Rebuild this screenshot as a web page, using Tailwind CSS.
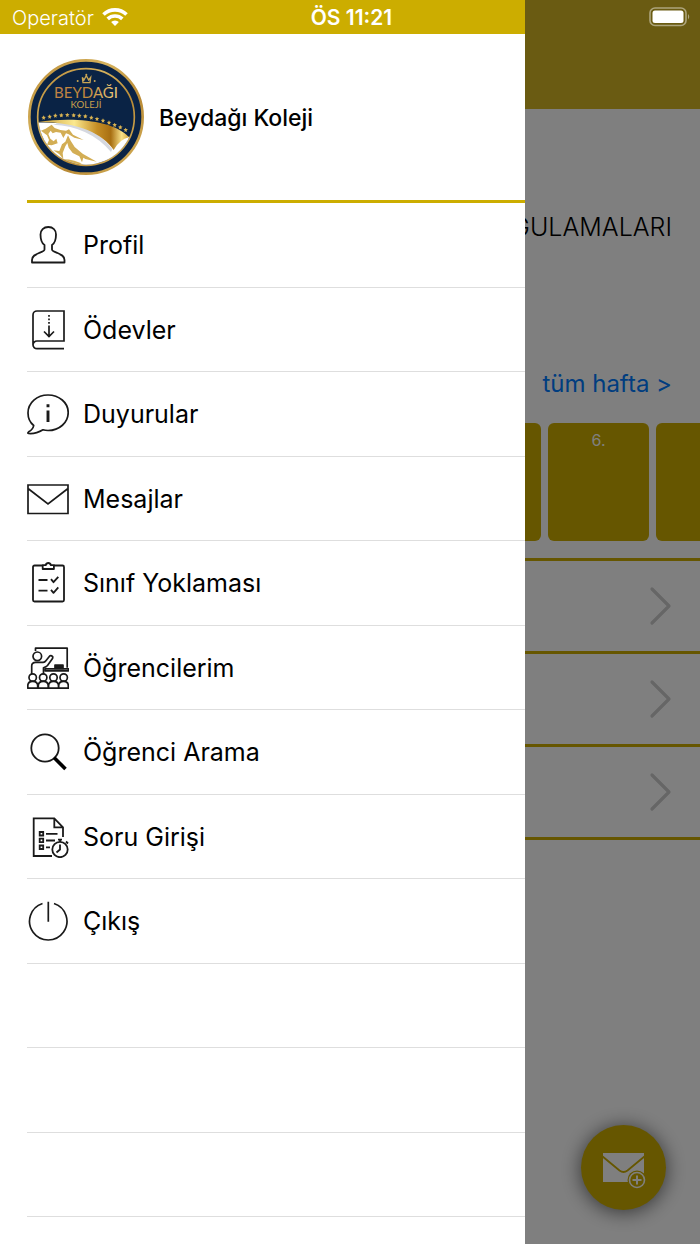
<!DOCTYPE html>
<html lang="tr">
  <head>
    <meta charset="UTF-8">
    <meta name="viewport" content="width=device-width, initial-scale=1">
    <title>Beydağı Koleji</title>
    <script src="https://cdn.jsdelivr.net/npm/@tailwindcss/browser@4"></script>
  </head>
  <body class="bg-white text-black font-['Inter','Liberation_Sans',sans-serif]">
    <div class="relative min-h-screen overflow-hidden">

      <!-- Ana ekran -->
      <main>
        <div class="h-[109px] bg-[#d4b624]"></div>
        <h1 class="mt-[100px] pr-7 text-right text-[25px] leading-9 font-light">UYGULAMALARI</h1>
        <div class="mt-[121px] pr-7 text-right">
          <a href="#hafta" class="text-2xl leading-9 text-[#007aff]">tüm hafta &gt;</a>
        </div>

        <!-- Ders saatleri -->
        <div class="mt-[21px] -mr-[57px] flex justify-end gap-[7px] text-center text-base text-white">
          <div class="h-[118px] w-[101px] shrink-0 rounded-md bg-[#ccad00]"></div>
          <div class="h-[118px] w-[101px] shrink-0 rounded-md bg-[#ccad00] pt-[5px]">6.</div>
          <div class="h-[118px] w-[101px] shrink-0 rounded-md bg-[#ccad00]"></div>
        </div>

        <!-- Liste -->
        <ul class="mt-[17px] border-t-3 border-[#ccad00]">
          <li class="flex h-[93px] items-center justify-end border-b-3 border-[#ccad00] pr-7">
            <svg class="h-10 w-6" viewBox="0 0 24 40" fill="none" stroke="#ccc" stroke-width="3.2" stroke-linecap="round" stroke-linejoin="round"><path d="M4 3l17 17L4 37"/></svg>
          </li>
          <li class="flex h-[93px] items-center justify-end border-b-3 border-[#ccad00] pr-7">
            <svg class="h-10 w-6" viewBox="0 0 24 40" fill="none" stroke="#ccc" stroke-width="3.2" stroke-linecap="round" stroke-linejoin="round"><path d="M4 3l17 17L4 37"/></svg>
          </li>
          <li class="flex h-[93px] items-center justify-end border-b-3 border-[#ccad00] pr-7">
            <svg class="h-10 w-6" viewBox="0 0 24 40" fill="none" stroke="#ccc" stroke-width="3.2" stroke-linecap="round" stroke-linejoin="round"><path d="M4 3l17 17L4 37"/></svg>
          </li>
        </ul>
      </main>

      <!-- Yeni mesaj -->
      <button type="button" aria-label="Yeni mesaj" class="absolute right-[34px] bottom-[34px] flex size-[85px] items-center justify-center rounded-full bg-[#ccad00] shadow-[0_2px_20px_rgba(0,0,0,0.6)]">
        <svg class="size-[44px]" viewBox="0 0 44 44">
          <path d="M1 7h41v29H1z" fill="#fff"/>
          <path d="M0 10l17.500 14.500q4 3 8 0L43 10" fill="none" stroke="#ccad00" stroke-width="1.800"/>
          <circle cx="35" cy="34" r="9.500" fill="#ccad00"/>
          <circle cx="35" cy="34" r="7.500" fill="#ccad00" stroke="#fff" stroke-width="1.600"/>
          <path d="M35 29.500v9M30.500 34h9" stroke="#fff" stroke-width="2"/>
        </svg>
      </button>

      <!-- Karartma -->
      <div class="absolute inset-0 bg-black/50"></div>

      <!-- Yan menü -->
      <aside class="absolute inset-y-0 left-0 w-3/4 overflow-hidden bg-white">
        <div class="h-[34px] bg-[#ccad00]"></div>
        <div class="ml-[27px] flex h-[169px] items-center gap-[14px] border-b-3 border-[#ccad00]">
          <svg class="size-[118px]" viewBox="22 24 354 354" role="img" aria-label="Beydağı Koleji">
            <defs>
              <linearGradient id="gold" x1="0" y1="0" x2="1" y2="1">
                <stop offset="0" stop-color="#b98a35"/>
                <stop offset=".35" stop-color="#d6b25c"/>
                <stop offset=".65" stop-color="#b98a35"/>
                <stop offset="1" stop-color="#d9b65f"/>
              </linearGradient>
              <linearGradient id="letters" x1="0" y1="0" x2="1" y2="0">
                <stop offset="0" stop-color="#c08245"/>
                <stop offset=".5" stop-color="#c0893a"/>
                <stop offset="1" stop-color="#f0d080"/>
              </linearGradient>
              <linearGradient id="ribbon" x1="0" y1="0" x2="1" y2="0">
                <stop offset="0" stop-color="#c99a35"/>
                <stop offset=".4" stop-color="#fbe98f"/>
                <stop offset=".65" stop-color="#c58e25"/>
                <stop offset=".8" stop-color="#a86f12"/>
                <stop offset=".92" stop-color="#f8e087"/>
                <stop offset="1" stop-color="#d6a73c"/>
              </linearGradient>
              <clipPath id="disc"><circle cx="199" cy="201" r="143"/></clipPath>
            </defs>
            <circle cx="199" cy="201" r="170" fill="#0a2345" stroke="url(#gold)" stroke-width="8"/>
            <circle cx="199" cy="201" r="145" fill="none" stroke="url(#gold)" stroke-width="5"/>
            <g clip-path="url(#disc)">
              <path d="M50 218q110-4 170 30 55 26 108 12v90H50z" fill="#fff"/>
              <path d="M100 224q110 5 174 82l4-8q-50-70-150-82z" fill="#d5d8e0"/>
              <path d="M54 216c110-16 230-4 274 46q-28 6-46 38C250 252 180 216 54 216z" fill="url(#ribbon)"/>
              <!-- Dağlar -->
              <path d="M64 242l14-6 18-12 9 10 17 6 17 2 9-4 12 16 32 16-28-7-17-10-8-3-8 14-8-16-14-2-10 4-6-8-7 10 6 14 10 8 8-8 4 14-18 6-14-2 6-14-6-14z" fill="#d3ae55"/>
              <path d="M145 256l8 16 12 19 24 20 42 24-34-8-6-4-4 14-8-18-20-10-12-16-4-14-6 10-8 20 2 18-12-14-18-12 18 2 8-20 10-8z" fill="#d3ae55"/>
              <path d="M62 262l14 32 32 26-14-4-28-26z" fill="#d3ae55"/>
              <path d="M130 328q40 0 66 20l-40-4z" fill="#d3ae55"/>
            </g>
            <path d="M188 82l5 8 7-13 7 13 6-8-2 16h-21z" fill="none" stroke="#c9a555" stroke-width="4"/>
            <circle cx="200" cy="74" r="3" fill="#c9a555"/>
            <circle cx="174" cy="93" r="3" fill="#c9a555"/>
            <circle cx="225" cy="93" r="3" fill="#c9a555"/>
            <text x="199" y="143" text-anchor="middle" font-family="Lato, sans-serif" font-size="45" fill="url(#letters)">BEYDAĞI</text>
            <text x="199" y="175" text-anchor="middle" font-family="Lato, sans-serif" font-size="29" fill="#c9a04c">KOLEJİ</text>
            <g fill="#d9b352">
              <path id="star" d="M0-6l2 4 5 1-4 3 1 5-4-2-4 2 1-5-4-3 5-1z" transform="translate(72 202)"/>
              <use href="#star" x="18" y="-3"/>
              <use href="#star" x="35" y="-6"/>
              <use href="#star" x="53" y="-7"/>
              <use href="#star" x="71" y="-8"/>
              <use href="#star" x="90" y="-7"/>
              <use href="#star" x="107" y="-6"/>
              <use href="#star" x="125" y="-4"/>
              <use href="#star" x="143" y="0"/>
              <use href="#star" x="160" y="4"/>
              <use href="#star" x="178" y="9"/>
              <use href="#star" x="196" y="15"/>
              <use href="#star" x="213" y="22"/>
              <use href="#star" x="230" y="29"/>
              <use href="#star" x="246" y="37"/>
            </g>
          </svg>
          <h2 class="pt-[2px] text-[23px] font-medium">Beydağı Koleji</h2>
        </div>

        <nav class="ml-[27px] text-[25px]">
          <ul>
            <li class="border-b border-[#dedede] odd:h-[85px] even:h-[84px]">
              <a href="#profil" class="flex h-full items-center gap-[14px]">
                <svg class="size-[42px]" viewBox="0 0 42 42" fill="none" stroke="#1a1a1a" stroke-width="1.800" stroke-linejoin="round"><path d="M5 38.500h32.500v-2.500c0-4-3.500-5.500-7-7-3-1.200-5.500-2-5.500-3.500v-4.500c3-2 4-5.500 4-10.500 0-4.500-3-7.500-7.700-7.500s-7.800 3-7.800 7.500c0 5 1 8.500 4 10.500v4.500c0 1.500-2.500 2.300-5.500 3.500-3.500 1.500-7 3-7 7z"/></svg>
                <span class="pt-[2px]">Profil</span>
              </a>
            </li>
            <li class="border-b border-[#dedede] odd:h-[85px] even:h-[84px]">
              <a href="#odevler" class="flex h-full items-center gap-[14px]">
                <svg class="size-[42px]" viewBox="0 0 42 42" fill="none" stroke="#1a1a1a" stroke-width="1.700"><path d="M37 39.700H10a4 4 0 0 1-4-4V6a4 4 0 0 1 4-4h27v30H10a4 4 0 0 0-4 4M22 16.500V27M17 22.500l5 5 5-5"/><path d="M22 6v1.800M22 9.500v1.800M22 13v1.800"/></svg>
                <span class="pt-[2px]">Ödevler</span>
              </a>
            </li>
            <li class="border-b border-[#dedede] odd:h-[85px] even:h-[84px]">
              <a href="#duyurular" class="flex h-full items-center gap-[14px]">
                <svg class="size-[42px]" viewBox="0 0 42 42" fill="none" stroke="#1a1a1a" stroke-width="1.700" stroke-linejoin="round"><path d="M6.700 32.500C3 29.500 1 25 1 20 1 9.500 10 2 21 2s20.200 7.500 20.200 17.500S32.500 37.500 21 37.500c-2 0-3.500-.2-5-.7-4.500 2.700-9.500 4.200-14.500 3.700-1-.2-.7-1 .2-1.700 2.600-1.500 4.600-3.300 5-6.300z"/><path d="M21 17.500v11.500M21 11.300v2.900" stroke-width="2.900"/></svg>
                <span class="pt-[2px]">Duyurular</span>
              </a>
            </li>
            <li class="border-b border-[#dedede] odd:h-[85px] even:h-[84px]">
              <a href="#mesajlar" class="flex h-full items-center gap-[14px]">
                <svg class="size-[42px]" viewBox="0 0 42 42" fill="none" stroke="#1a1a1a" stroke-width="1.700"><path d="M1 7h40v28.500H1zM1 10.500L21 26l20-15.500"/></svg>
                <span class="pt-[2px]">Mesajlar</span>
              </a>
            </li>
            <li class="border-b border-[#dedede] odd:h-[85px] even:h-[84px]">
              <a href="#yoklama" class="flex h-full items-center gap-[14px]">
                <svg class="size-[42px]" viewBox="0 0 42 42" fill="none" stroke="#1a1a1a" stroke-width="1.800" stroke-linejoin="round"><path d="M15.500 3.500H7.500A1.500 1.500 0 0 0 6 5v33a1.500 1.500 0 0 0 1.500 1.500h28A1.500 1.500 0 0 0 37 38V5a1.500 1.500 0 0 0-1.500-1.500H27"/><path d="M15.700 3.200h3c.4-1.600 1.200-2.200 2.600-2.200s2.200.6 2.600 2.200h3V7H15.700z"/><path d="M11.500 18h9M24 17.200l2.500 3 4.800-5.400M11.500 28.700h9M24 27.800l2.500 3 4.800-5.400"/></svg>
                <span class="pt-[2px]">Sınıf Yoklaması</span>
              </a>
            </li>
            <li class="border-b border-[#dedede] odd:h-[85px] even:h-[84px]">
              <a href="#ogrencilerim" class="flex h-full items-center gap-[14px]">
                <svg class="size-[42px]" viewBox="0 0 42 42" fill="none" stroke="#1a1a1a" stroke-width="1.700" stroke-linejoin="round"><path d="M8.500 4V1.200h31.700v19.500"/><circle cx="10.300" cy="9.300" r="4.300"/><path d="M4.700 27.500V19c0-2.500 1.500-3.700 4-3.700h7.500c1.300 0 2-.5 2.700-1.500l3.600-4.500c1-1.300 3.800-.3 3.300 1.500-.2.700-.6 1.200-1 1.800l-4.300 6c-1 1.300-2 1.700-4 2.200v6.700"/><path d="M18 21.800h23.500v2H18z"/><path d="M28 18h8v3.500h-8z" fill="#1a1a1a"/><circle cx="5.700" cy="30.500" r="3.700"/><circle cx="16.200" cy="30.500" r="3.700"/><circle cx="26.500" cy="30.500" r="3.700"/><circle cx="36.700" cy="30.500" r="3.700"/><path d="M.8 41.200v-2.400c0-2.700 2-4.400 4.900-4.400s5 1.700 5 4.400v2.400zM11.300 41.200v-2.400c0-2.700 2-4.400 4.900-4.400s5 1.700 5 4.400v2.400zM21.600 41.200v-2.400c0-2.700 2-4.400 4.900-4.400s5 1.700 5 4.400v2.400zM31.700 41.200v-2.400c0-2.700 2-4.400 4.900-4.400s4.700 1.700 4.700 4.400v2.400z"/></svg>
                <span class="pt-[2px]">Öğrencilerim</span>
              </a>
            </li>
            <li class="border-b border-[#dedede] odd:h-[85px] even:h-[84px]">
              <a href="#arama" class="flex h-full items-center gap-[14px]">
                <svg class="size-[42px]" viewBox="0 0 42 42" fill="none" stroke="#1a1a1a"><circle cx="18" cy="17" r="13.700" stroke-width="1.800"/><path d="M27 26.500l11.500 11.500" stroke="#000" stroke-width="3.600"/></svg>
                <span class="pt-[2px]">Öğrenci Arama</span>
              </a>
            </li>
            <li class="border-b border-[#dedede] odd:h-[85px] even:h-[84px]">
              <a href="#soru" class="flex h-full items-center gap-[14px]">
                <svg class="size-[42px]" viewBox="0 0 42 42" fill="none" stroke="#1a1a1a" stroke-width="1.800"><path d="M25 40H6.700V2.300h20.600L36 11.300V21M27.300 2.700v8.600H36"/><path d="M12.700 16h3.500v3.500h-3.500zM12.700 22.700h3.500v3.500h-3.500zM12.700 29.500h3.500v3.500h-3.500zM19 17.800h11.500M19 24.500h9M19 31.300h4"/><circle cx="33" cy="33.500" r="7.700"/><path d="M33 28.500v5l-3.500 3M31 23.700h4M33 24v2M39 25.500l2 2"/></svg>
                <span class="pt-[2px]">Soru Girişi</span>
              </a>
            </li>
            <li class="border-b border-[#dedede] odd:h-[85px] even:h-[84px]">
              <a href="#cikis" class="flex h-full items-center gap-[14px]">
                <svg class="size-[42px]" viewBox="0 0 42 42" fill="none" stroke="#1a1a1a" stroke-width="1.700"><path d="M15.500 3.500a18.700 18.700 0 1 0 11.500 0M21.300 1.700v20"/></svg>
                <span class="pt-[2px]">Çıkış</span>
              </a>
            </li>
            <li class="border-b border-[#dedede] odd:h-[85px] even:h-[84px]"></li>
            <li class="border-b border-[#dedede] odd:h-[85px] even:h-[84px]"></li>
            <li class="border-b border-[#dedede] odd:h-[85px] even:h-[84px]"></li>
          </ul>
        </nav>
      </aside>

      <!-- Durum çubuğu -->
      <header class="absolute inset-x-0 top-0 grid h-[34px] grid-cols-3 items-center pr-[9px] pl-3 text-xl text-white">
        <div class="flex items-center gap-2">
          <span class="pt-[2px] font-light">Operatör</span>
          <svg class="h-5 w-[26px]" viewBox="0 0 26 20" fill="none" stroke="#fff" stroke-width="3.600"><path d="M1.500 7.500a16.500 16.500 0 0 1 23 0M5.700 11.900a10.500 10.500 0 0 1 14.600 0"/><path d="M13 19l-3.900-4a5.600 5.600 0 0 1 7.800 0z" fill="#fff" stroke="none"/></svg>
        </div>
        <span class="pt-[2px] text-center text-[21px] font-semibold">ÖS 11:21</span>
        <svg class="h-5 w-[42px] justify-self-end" viewBox="0 0 42 20"><rect x="1" y="1" width="36" height="17.500" rx="5" fill="none" stroke="#fff" stroke-opacity=".45" stroke-width="1.600"/><rect x="3.500" y="3.500" width="31" height="12.500" rx="2.500" fill="#fff"/><path d="M39 7q2.500 2.700 0 5.500z" fill="#fff" fill-opacity=".45"/></svg>
      </header>
    </div>
  </body>
</html>
